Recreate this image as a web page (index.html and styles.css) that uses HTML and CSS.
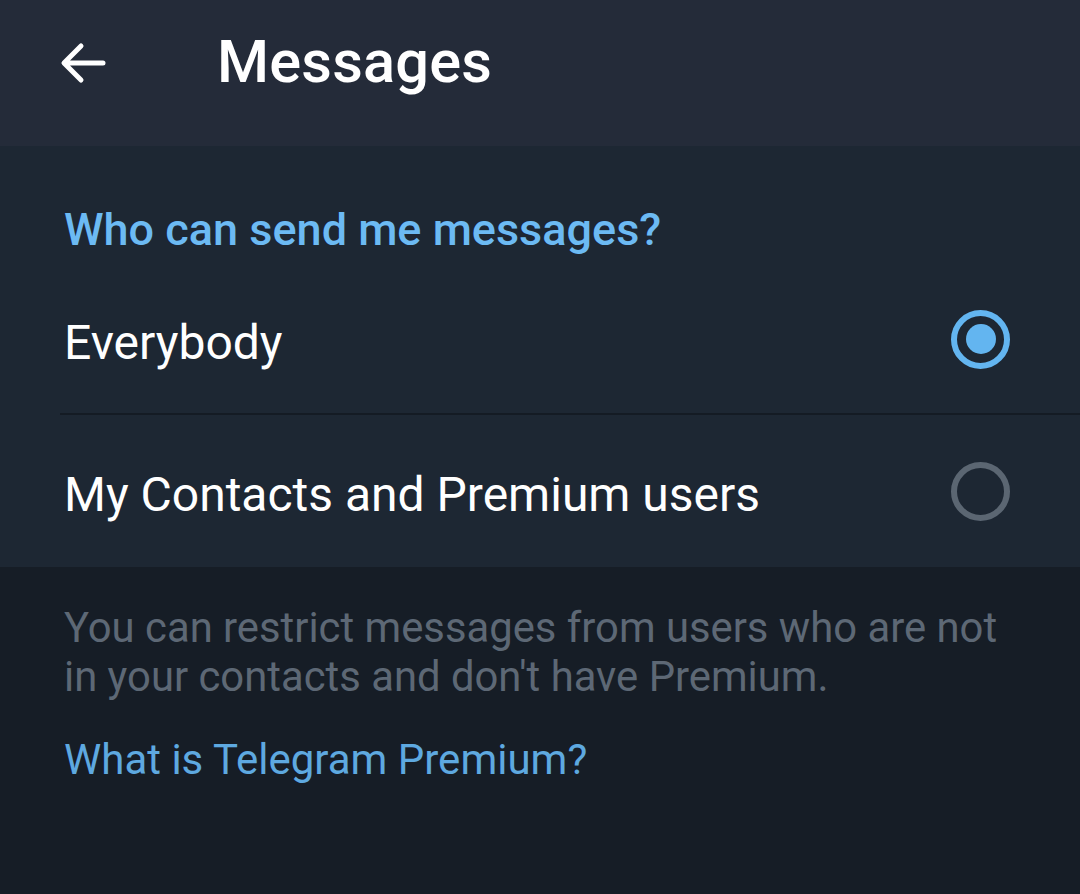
FILE: index.html
```html
<!DOCTYPE html>
<html>
<head>
<meta charset="utf-8">
<link rel="stylesheet" href="styles.css">
</head>
<body>
<div class="app">
  <header class="topbar">
    <svg class="back" width="52" height="52" viewBox="0 0 52 52">
      <path d="M46 26 H8 M24 9 L7 26 L24 43" fill="none" stroke="#ffffff" stroke-width="5" stroke-linecap="round" stroke-linejoin="round"/>
    </svg>
    <h1 class="title">Messages</h1>
  </header>
  <section class="card">
    <div class="card-head">Who can send me messages?</div>
    <div class="row with-divider">
      <span class="row-label">Everybody</span>
      <span class="radio checked"><span class="dot"></span></span>
    </div>
    <div class="row">
      <span class="row-label">My Contacts and Premium users</span>
      <span class="radio"></span>
    </div>
  </section>
  <section class="info">
    <p class="info-text">You can restrict messages from users who are not in your contacts and don't have Premium.</p>
    <p class="info-link">What is Telegram Premium?</p>
  </section>
</div>
</body>
</html>
```

FILE: styles.css
```css
html, body {
  margin: 0;
  padding: 0;
  background: #161d26;
}
body {
  font-family: Roboto, "Noto Sans", sans-serif;
  width: 1080px;
  height: 894px;
  overflow: hidden;
}
.app {
  display: flex;
  flex-direction: column;
  height: 894px;
}
.topbar {
  height: 146px;
  background: #242b39;
  display: flex;
  align-items: center;
  padding-left: 57px;
  box-sizing: border-box;
}
.back {
  display: block;
  margin-top: -20px;
}
.title {
  margin: -22px 0 0 108px;
  font-size: 59.5px;
  font-weight: 500;
  color: #ffffff;
  letter-spacing: 0.2px;
}
.card {
  background: #1d2733;
}
.card-head {
  padding: 50px 0 0 64px;
  height: 67px;
  line-height: 67px;
  font-size: 45px;
  font-weight: 500;
  color: #6cbaf3;
}
.row {
  height: 152px;
  display: flex;
  align-items: center;
  justify-content: space-between;
  padding: 0 70px 0 64px;
  position: relative;
  box-sizing: border-box;
}
.with-divider::after {
  content: "";
  position: absolute;
  left: 60px;
  right: 0;
  bottom: 0;
  height: 2px;
  background: #141b24;
}
.row-label {
  font-size: 48px;
  line-height: 60px;
  padding-top: 8px;
  color: #ffffff;
}
.radio {
  width: 59px;
  height: 59px;
  border-radius: 50%;
  border: 6px solid #5b6672;
  box-sizing: border-box;
  display: flex;
  align-items: center;
  justify-content: center;
}
.radio.checked {
  border-color: #63b5f0;
}
.dot {
  width: 30px;
  height: 30px;
  border-radius: 50%;
  background: #63b5f0;
}
.info {
  padding: 36px 64px 0 64px;
  flex: 1;
}
.info-text {
  margin: 0;
  font-size: 41.8px;
  line-height: 49px;
  color: #5d6875;
}
.info-link {
  margin: 34px 0 0 0;
  font-size: 42px;
  line-height: 49px;
  color: #5ea9e0;
}
```
